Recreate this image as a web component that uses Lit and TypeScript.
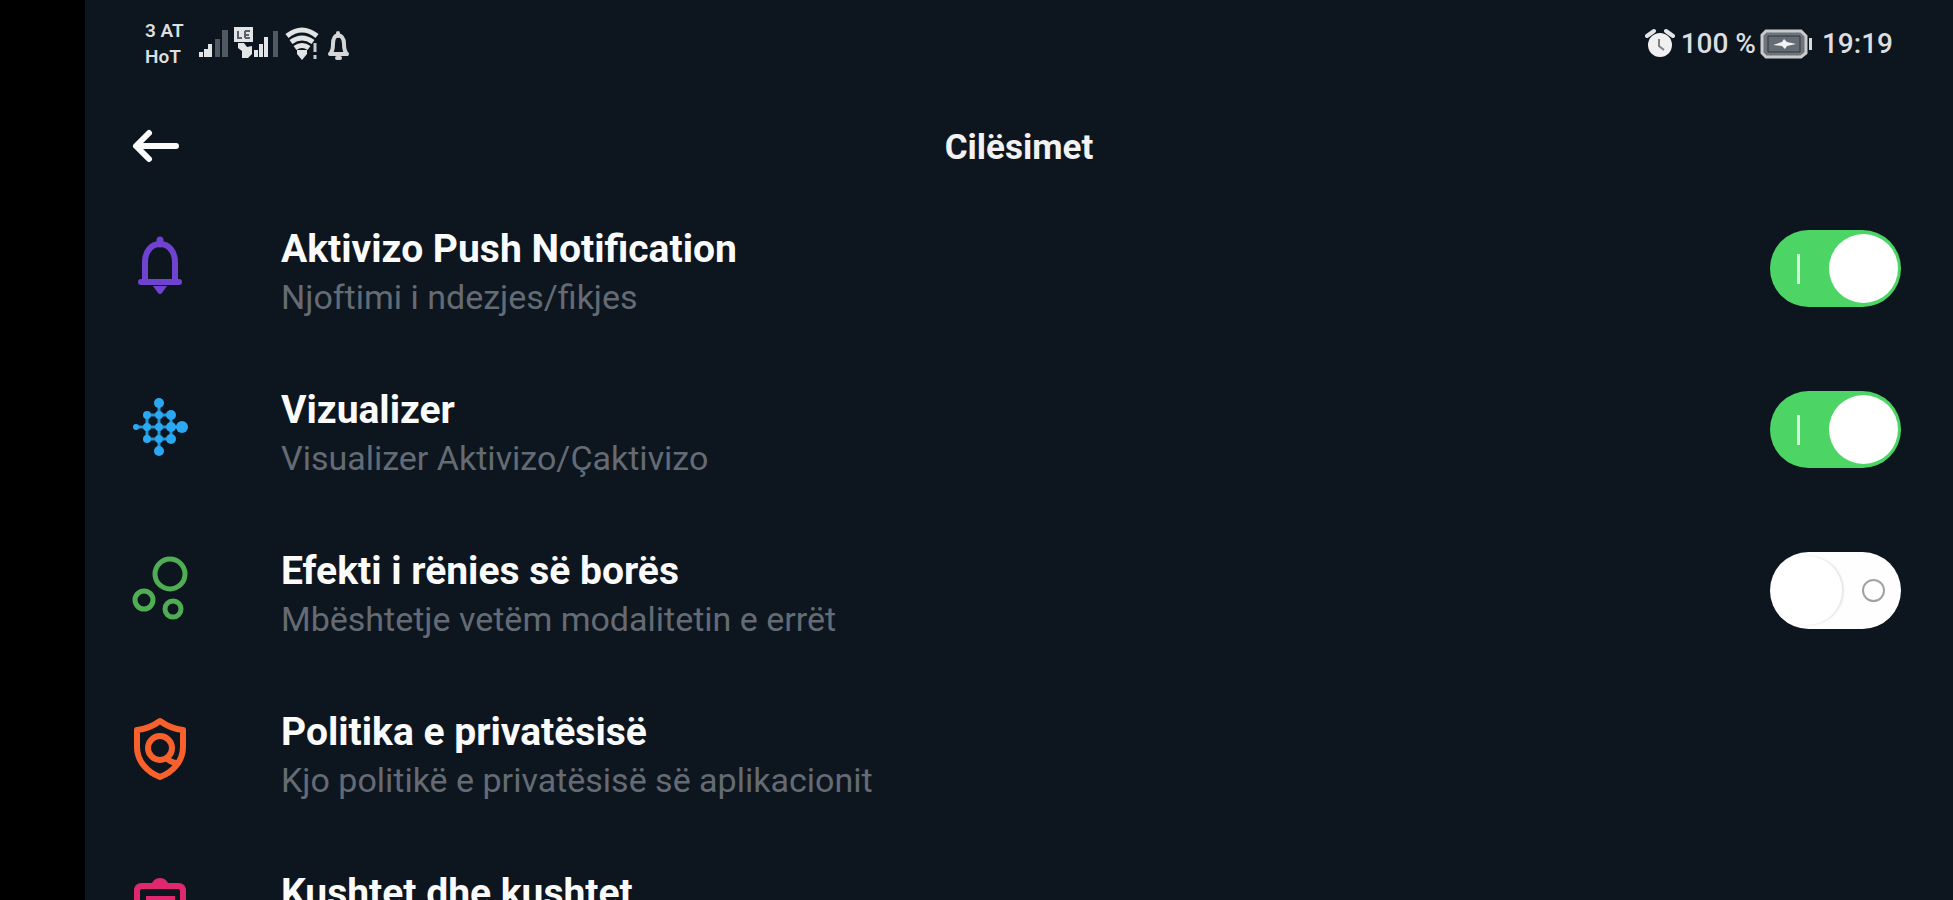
import { LitElement, html, svg, css, nothing } from "lit";
import { customElement, property, state } from "lit/decorators.js";

type IconName = "bell" | "dots" | "bubbles" | "shield" | "clipboard";

interface Setting {
  id: string;
  icon: IconName;
  title: string;
  detail: string;
  on?: boolean;
}

const icons = {
  bell: svg`
    <g transform="translate(0 4)">
      <path d="M31 19V23" stroke="#6f42cf" stroke-width="7" stroke-linecap="round"/>
      <path d="M16 61V41c0-10 6-18 15-18s15 8 15 18v20" fill="none" stroke="#6f42cf" stroke-width="6"/>
      <path d="M12 61H50" stroke="#6f42cf" stroke-width="6" stroke-linecap="round"/>
      <path d="M24 65H38L33 72Q31 74 29 72Z" fill="#6f42cf"/>
    </g>`,
  dots: svg`
    <g transform="translate(0 4)">
      <path d="M18 33H42M6 45H54M18 57H42M18 33V57M30 21V69M42 33V57" stroke="#2196d8" stroke-width="3"/>
      <g fill="#2aa9f2">
        <circle cx="30" cy="21" r="5"/><circle cx="30" cy="69" r="5"/>
        <circle cx="18" cy="33" r="4"/><circle cx="30" cy="33" r="4"/><circle cx="42" cy="33" r="5"/>
        <circle cx="7" cy="45" r="3"/><circle cx="18" cy="45" r="4"/><circle cx="30" cy="45" r="4"/><circle cx="42" cy="45" r="5"/><circle cx="53" cy="45" r="6"/>
        <circle cx="18" cy="57" r="4"/><circle cx="30" cy="57" r="4"/><circle cx="42" cy="57" r="5"/>
      </g>
    </g>`,
  bubbles: svg`
    <g transform="translate(0 3)" fill="none" stroke="#4fae54" stroke-width="5">
      <circle cx="41" cy="32" r="15"/><circle cx="15" cy="58" r="9"/><circle cx="44" cy="67" r="8"/>
    </g>`,
  shield: svg`
    <g transform="translate(0 1)" fill="none" stroke="#f8602c" stroke-width="6" stroke-linejoin="round">
      <path d="M31 20Q42 28 54 29V46C54 60 44 71 31 76C18 71 8 60 8 46V29Q20 28 31 20Z"/>
      <circle cx="31" cy="47" r="12"/>
      <path d="M37 57Q43 62 48 62"/>
    </g>`,
  clipboard: svg`
    <path d="M8 84V30Q8 25 13 25H49Q54 25 54 30V84Z" fill="none" stroke="#e0286f" stroke-width="6"/>
    <path d="M22 25Q24 17 31 17T40 25Z" fill="#e0286f"/>
    <path d="M17 35H46V39H17Z" fill="#e0286f"/>`,
};

@customElement("setting-row")
class SettingRow extends LitElement {
  @property({ attribute: false }) setting!: Setting;
  @state() private checked = false;

  static styles = css`
    :host { display: block; }
    .row {
      display: flex;
      align-items: flex-start;
      height: 161px;
      color: inherit;
      text-decoration: none;
      cursor: pointer;
    }
    .icon { flex: none; width: 62px; height: 90px; margin-right: 90px; }
    .text { flex: 1; min-width: 0; padding-top: 8px; }
    .title, .detail { display: block; white-space: nowrap; }
    .title { font-size: 39px; line-height: 48px; font-weight: 700; color: #fbfbfb; }
    .detail { font-size: 34px; line-height: 48px; color: #656b74; }
    .switch {
      appearance: none;
      box-sizing: border-box;
      flex: none;
      display: flex;
      align-items: center;
      justify-content: space-between;
      width: 131px;
      height: 77px;
      margin: 13px 0 0;
      padding: 0 3px 0 27px;
      border-radius: 39px;
      background: #4cd564;
      cursor: pointer;
    }
    .switch::before { content: ""; width: 3px; height: 30px; background: #d4f6d9; }
    .switch::after {
      content: "";
      width: 69px;
      height: 69px;
      border-radius: 50%;
      background: #fff;
    }
    .switch:not(:checked) {
      flex-direction: row-reverse;
      padding: 0 16px 0 3px;
      background: #fefefe;
    }
    .switch:not(:checked)::before {
      box-sizing: border-box;
      width: 23px;
      height: 23px;
      border: 2px solid #a2a2a2;
      border-radius: 50%;
      background: none;
    }
    .switch:not(:checked)::after { box-shadow: 2px 0 2px #e6e6e6; }
  `;

  willUpdate(changed: Map<string, unknown>) {
    if (changed.has("setting")) this.checked = !!this.setting.on;
  }

  private toggle(e: Event) {
    this.checked = (e.target as HTMLInputElement).checked;
  }

  render() {
    const s = this.setting;
    const hasSwitch = s.on !== undefined;
    const body = html`
      <svg class="icon" viewBox="0 0 62 90" aria-hidden="true">${icons[s.icon]}</svg>
      <span class="text">
        <span class="title">${s.title}</span>
        <span class="detail">${s.detail}</span>
      </span>
      ${hasSwitch
        ? html`<input class="switch" id=${s.id} type="checkbox" role="switch" .checked=${this.checked} @change=${this.toggle}>`
        : nothing}`;
    return hasSwitch
      ? html`<label class="row" for=${s.id}>${body}</label>`
      : html`<a class="row" href="#${s.id}">${body}</a>`;
  }
}

@customElement("status-bar")
class StatusBar extends LitElement {
  static styles = css`
    :host {
      display: flex;
      justify-content: space-between;
      align-items: center;
      height: 88px;
      padding: 0 60px 0 60px;
      color: #dcdee0;
    }
    .group { display: flex; align-items: center; }
    .carrier { width: 54px; font-size: 19px; line-height: 26px; font-weight: 600; }
    .signals { width: 152px; height: 40px; }
    .reading { font-size: 28px; line-height: 36px; font-weight: 500; white-space: nowrap; }
    .alarm { width: 30px; height: 32px; margin-right: 6px; }
    .battery { width: 54px; height: 34px; margin: 0 8px 0 4px; }
  `;

  render() {
    return html`
      <div class="group">
        <div class="carrier">3 AT<br>HoT</div>
        <svg class="signals" viewBox="0 0 152 40" aria-hidden="true">
          <g fill="#e2e4e6">
            <path d="M0 28h4v5H0zM5 25h4v8H5zM9 20h4v13H9z"/>
            <path d="M35 3h19v15H35zM39 19h6l3 4 5-1v8l-4 4h-6v-7l-4-3z"/>
            <path d="M55 26h4v7h-4zM60 20h4v13h-4zM65 13h4v20h-4z"/>
          </g>
          <path d="M16 15h5v18h-5zM23 6h6v27h-6zM74 7h5v26h-5z" fill="#505962"/>
          <path d="M39 7v7h4M46 7h5M46 11h4M46 14h5M46 7v7" fill="none" stroke="#59616a" stroke-width="2"/>
          <path d="M88 12Q103 0 118 12M92 18Q103 10 114 18M96 24Q103 19 110 24" fill="none" stroke="#e2e4e6" stroke-width="5"/>
          <path d="M98 26h10v4l-5 6-5-6z" fill="#e2e4e6"/>
          <path d="M116 19v9M116 31v4" stroke="#c8cbce" stroke-width="3"/>
          <path d="M131 30q3-3 3-10 0-8 5-9 6 1 6 9 0 7 3 10z" fill="none" stroke="#d4d6d9" stroke-width="4" stroke-linejoin="round"/>
          <path d="M139 9v3M138 34h3" stroke="#d4d6d9" stroke-width="4" stroke-linecap="round"/>
        </svg>
      </div>
      <div class="group">
        <svg class="alarm" viewBox="0 0 30 32" aria-hidden="true">
          <path d="M2 8L9 3M28 8L21 3" stroke="#e4e5e7" stroke-width="4" stroke-linecap="round"/>
          <circle cx="15" cy="17" r="12" fill="#f0f0f1"/>
          <path d="M14 11v7l5 4" fill="none" stroke="#7c8288" stroke-width="2"/>
        </svg>
        <span class="reading">100 %</span>
        <svg class="battery" viewBox="0 0 54 34" aria-hidden="true">
          <path d="M6 4H41L46 9V26L41 30H6L2 26V8Z" fill="#6e747a" stroke="#c9cbce" stroke-width="3"/>
          <path d="M8 9H40V25H8Z" fill="#666c73" stroke="#30373f" stroke-width="1"/>
          <path d="M49 11h3v12h-3z" fill="#d8dadc"/>
          <path d="M13 18L22 15 24 12 27 15 36 17 27 19 25 22 22 19Z" fill="#f4f4f4"/>
        </svg>
        <time class="reading">19:19</time>
      </div>`;
  }
}

@customElement("app-root")
class AppRoot extends LitElement {
  static styles = css`
    :host {
      display: block;
      box-sizing: border-box;
      height: 100vh;
      border-left: 85px solid #000;
      background: #0d161f;
      font-family: Roboto, "Liberation Sans", sans-serif;
      overflow: hidden;
    }
    .screen { display: flex; flex-direction: column; height: 100%; }
    .header {
      flex: none;
      display: grid;
      grid-template-columns: 1fr auto 1fr;
      align-items: center;
      height: 119px;
      padding: 0 46px;
    }
    .back { width: 52px; height: 44px; padding: 0; border: 0; background: none; cursor: pointer; }
    .arrow { display: block; width: 52px; height: 44px; }
    .heading { margin: 0; font-size: 35px; line-height: 44px; font-weight: 700; color: #f2f2f2; }
    .list { flex: 1; min-height: 0; overflow-y: auto; scrollbar-width: none; padding: 10px 52px 0 44px; }
  `;

  private settings: Setting[] = [
    { id: "push", icon: "bell", title: "Aktivizo Push Notification", detail: "Njoftimi i ndezjes/fikjes", on: true },
    { id: "visualizer", icon: "dots", title: "Vizualizer", detail: "Visualizer Aktivizo/Çaktivizo", on: true },
    { id: "snow", icon: "bubbles", title: "Efekti i rënies së borës", detail: "Mbështetje vetëm modalitetin e errët", on: false },
    { id: "privacy", icon: "shield", title: "Politika e privatësisë", detail: "Kjo politikë e privatësisë së aplikacionit" },
    { id: "terms", icon: "clipboard", title: "Kushtet dhe kushtet", detail: "" },
  ];

  render() {
    return html`
      <div class="screen">
        <status-bar></status-bar>
        <header class="header">
          <button class="back" aria-label="Kthehu">
            <svg class="arrow" viewBox="0 0 52 44" aria-hidden="true">
              <path d="M45 20H6M18 7L5 20L18 33" fill="none" stroke="#fafafa" stroke-width="6" stroke-linecap="round" stroke-linejoin="round"/>
            </svg>
          </button>
          <h1 class="heading">Cilësimet</h1>
        </header>
        <main class="list">
          ${this.settings.map((s) => html`<setting-row .setting=${s}></setting-row>`)}
        </main>
      </div>`;
  }
}
